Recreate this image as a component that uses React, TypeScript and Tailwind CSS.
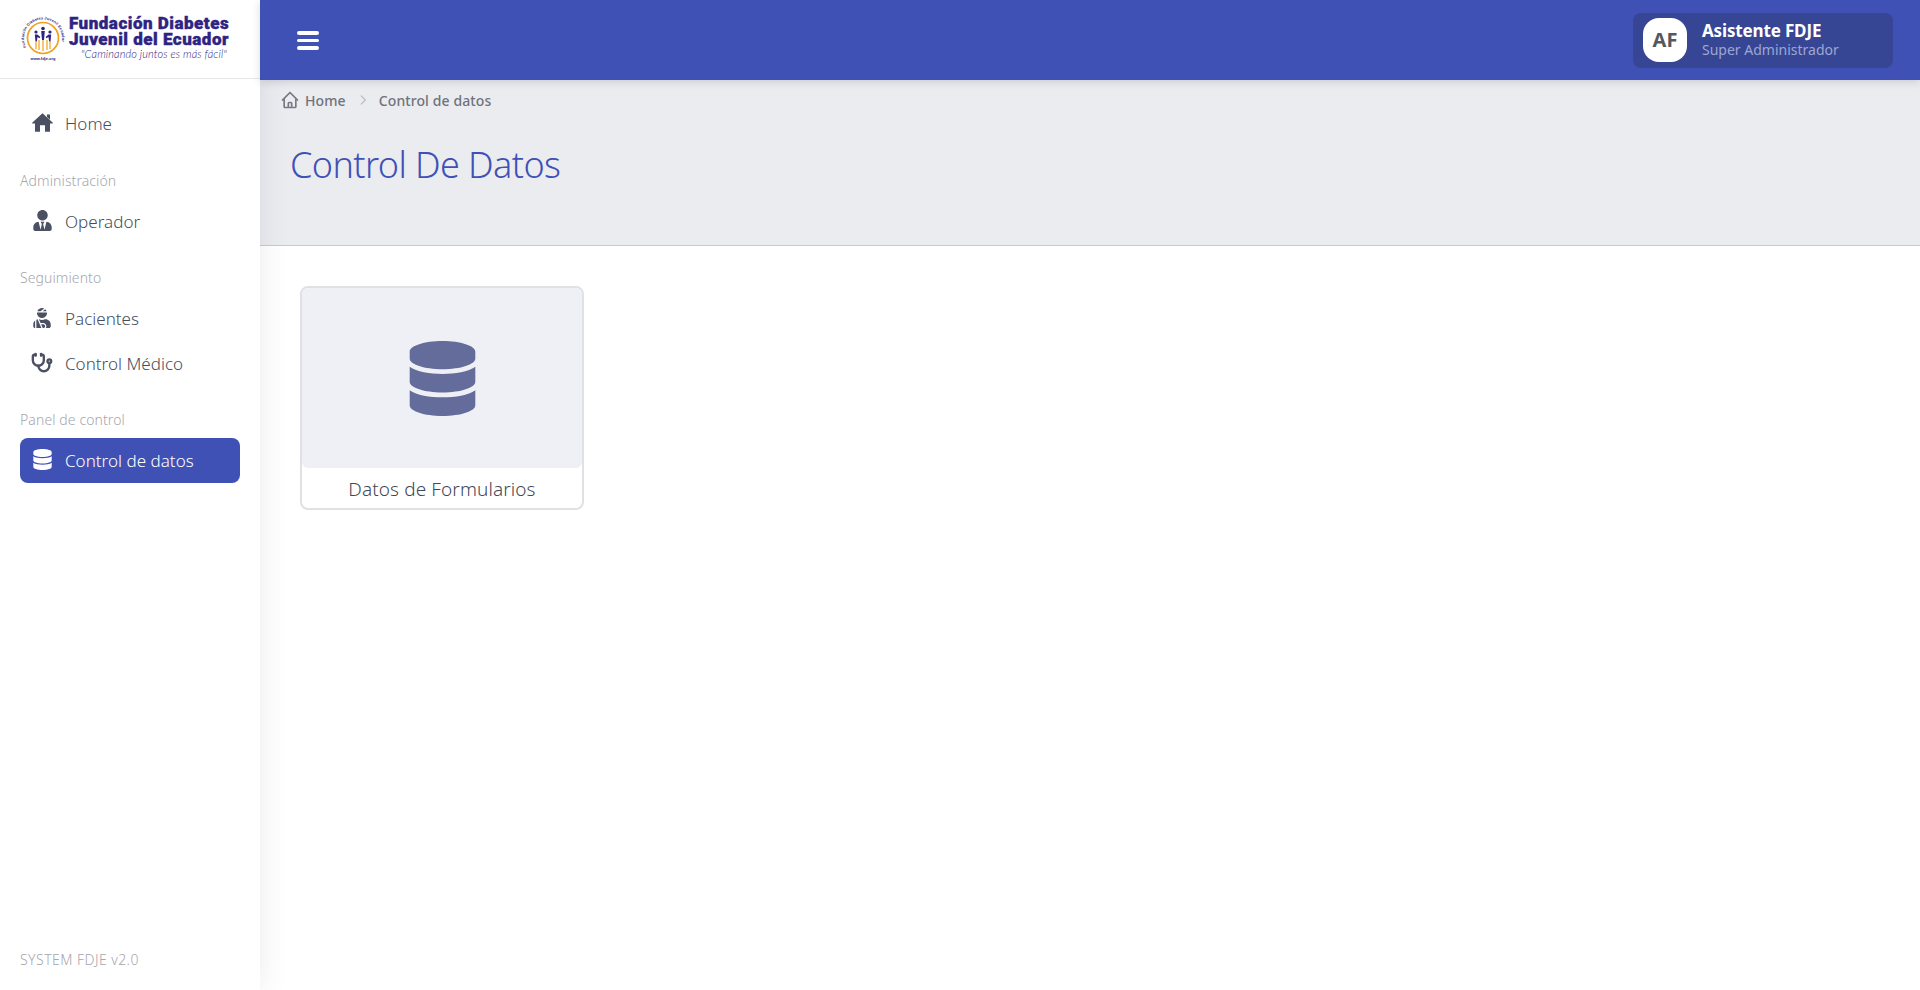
// Panel FDJE: sidebar, barra superior, cabecera de pagina y tarjeta de datos
import { FaDatabase, FaUserInjured, FaUserTie } from "react-icons/fa";
import { HiOutlineChevronRight, HiOutlineHome } from "react-icons/hi";
import { Stethoscope } from "lucide-react";
import type { ReactNode } from "react";

function Logo() {
  return (
    <div className="flex items-center h-[79px] pl-[20px] shrink-0 border-b border-[#e6e7ea]">
      <svg width="46" height="46" viewBox="0 0 46 46" className="shrink-0">
        <defs>
          <path id="logo-ring" d="M6.2 31.2 A19 19 0 1 1 39.8 31.2" fill="none" />
        </defs>
        <text fontSize="3.8" fontWeight="700" fill="#2e2383" fontFamily="Liberation Sans, sans-serif">
          <textPath href="#logo-ring" textLength="72">Fundación Diabetes Juvenil Ecuador</textPath>
        </text>
        <circle cx="23" cy="22" r="15.5" fill="#fff" stroke="#f0a01e" strokeWidth="1.7" />
        <g fill="#2e2383">
          <circle cx="23" cy="12.5" r="1.8" />
          <circle cx="16" cy="16" r="1.6" />
          <circle cx="30" cy="16" r="1.6" />
          <path d="M21.2 15 h3.6 l-.8 9 h-2z" />
          <path d="M14.8 18.5 h2.6 l3 2.5 -.9 1.2 -2-1.2 -.6 4.5 h-1.4z" />
          <path d="M31.2 18.5 h-2.6 l-3 2.5 .9 1.2 2-1.2 .6 4.5 h1.4z" />
        </g>
        <path d="M16 25 v8 M19 24 v10 M23 24 v11 M27 24 v10 M30 25 v8" stroke="#f0a01e" strokeWidth="1.2" />
        <text x="23" y="44" textAnchor="middle" fontSize="4" fontWeight="700" fill="#2e2383" fontFamily="Liberation Sans, sans-serif">www.fdje.org</text>
      </svg>
      <div className="ml-[3px] -mt-[3px] flex flex-col items-start">
        <span className="w-[170px] text-[17px] leading-[16px] font-black tracking-[0.5px] text-[#2e2383] font-['Roboto',sans-serif] [-webkit-text-stroke:0.4px_#2e2383]">Fundación Diabetes Juvenil del Ecuador</span>
        <span className="ml-[12px] text-[11px] leading-[13px] italic font-light tracking-[0.1px] text-[#2e2383] font-['Lato',sans-serif]">"Caminando juntos es más fácil"</span>
      </div>
    </div>
  );
}

function HomeIcon() {
  return (
    <svg width="21" height="19" viewBox="0 0 21 19" fill="currentColor">
      <path d="M10.5 0.3 L20.6 9.6 a0.5 0.5 0 0 1 -0.3 0.9 H18 V18.2 a0.6 0.6 0 0 1 -0.6 0.6 H13 V12.2 H8 V18.8 H3.6 a0.6 0.6 0 0 1 -0.6 -0.6 V10.5 H0.7 a0.5 0.5 0 0 1 -0.3 -0.9 Z" />
      <path d="M15 1.5 h2.6 a0.4 0.4 0 0 1 0.4 0.4 V6.8 L15 4z" />
    </svg>
  );
}

function NavItem({ icon, label, active }: { icon: ReactNode; label: string; active?: boolean }) {
  return (
    <div
      className={
        active
          ? "flex items-center h-[45px] pl-[11px] rounded-[8px] bg-[#3f51b5] text-white"
          : "flex items-center h-[45px] pl-[11px] text-[#484d5b]"
      }
    >
      <span className={active ? "w-[22px] flex justify-center -mt-[2px] text-white" : "w-[22px] flex justify-center -mt-[2px] text-[#4b5163]"}>{icon}</span>
      <span className="ml-[12px] text-[17px] leading-none font-light tracking-[0.02px]">{label}</span>
    </div>
  );
}

function NavLabel({ children, tight }: { children: string; tight?: boolean }) {
  return (
    <div
      className={
        tight
          ? "mt-[24px] mb-[8px] h-[20px] text-[14px] leading-[20px] font-light tracking-[0.1px] text-[#a5a7ae]"
          : "mt-[24.5px] mb-[8px] h-[20px] text-[14px] leading-[20px] font-light tracking-[0.1px] text-[#a5a7ae]"
      }
    >
      {children}
    </div>
  );
}

function Sidebar() {
  return (
    <aside className="relative z-10 w-[260px] shrink-0 flex flex-col bg-white shadow-[0_0_28px_rgba(60,60,80,0.1)]">
      <Logo />
      <nav className="flex-1 px-[20px] pt-[22px]">
        <NavItem icon={<HomeIcon />} label="Home" />
        <NavLabel>Administración</NavLabel>
        <NavItem icon={<FaUserTie size={21} />} label="Operador" />
        <NavLabel>Seguimiento</NavLabel>
        <NavItem icon={<FaUserInjured size={20} />} label="Pacientes" />
        <NavItem icon={<Stethoscope size={24} strokeWidth={2.6} />} label="Control Médico" />
        <NavLabel tight>Panel de control</NavLabel>
        <NavItem icon={<FaDatabase size={21} />} label="Control de datos" active />
      </nav>
      <div className="px-[20px] pb-[20px] text-[14px] leading-[20px] font-light tracking-[0.45px] text-[#a5a7ae]">SYSTEM FDJE v2.0</div>
    </aside>
  );
}

function Topbar() {
  return (
    <header className="relative z-10 h-[80px] shrink-0 flex items-center justify-between pl-[37px] pr-[27px] bg-[#3f51b5] shadow-[0_2px_8px_rgba(40,40,60,0.16)]">
      <div className="flex flex-col gap-[4px] w-[22px]">
        <span className="h-[4px] rounded-full bg-white" />
        <span className="h-[3px] rounded-full bg-white" />
        <span className="h-[4px] rounded-full bg-white" />
      </div>
      <div className="flex items-center w-[260px] h-[55px] pl-[10px] rounded-[8px] bg-[#374694]">
        <div className="w-[44px] h-[44px] rounded-[16px] bg-white flex items-center justify-center text-[20px] font-bold text-[#54585f]">AF</div>
        <div className="ml-[15px] flex flex-col">
          <span className="text-[17px] leading-[20px] font-bold tracking-[-0.15px] text-white">Asistente FDJE</span>
          <span className="text-[14px] leading-[18px] tracking-[0px] text-[#9da6d2]">Super Administrador</span>
        </div>
      </div>
    </header>
  );
}

function PageHead() {
  return (
    <div className="h-[166px] shrink-0 bg-[#ebecf0] border-b border-[#c9cacd]">
      <div className="flex items-center h-[40px] pl-[20px] text-[14px] font-medium tracking-[0.1px] text-[#6f737c]">
        <HiOutlineHome size={20} className="text-[#777a83]" />
        <span className="ml-[5px]">Home</span>
        <HiOutlineChevronRight size={14} className="ml-[10px] text-[#b9bbc2]" />
        <span className="ml-[9px]">Control de datos</span>
      </div>
      <h1 className="mt-[23px] pl-[30px] text-[36px] leading-[44px] font-light tracking-[-0.6px] text-[#3f51b5]">Control De Datos</h1>
    </div>
  );
}

function DataCard() {
  return (
    <div className="w-[284px] h-[224px] flex flex-col rounded-[8px] border-2 border-[#e0e1e5] bg-white">
      <div className="h-[180px] flex items-center justify-center rounded-[6px] bg-[#eff0f6]">
        <FaDatabase size={75} className="text-[#636c9a]" />
      </div>
      <div className="flex-1 flex items-center justify-center pt-[3px] text-[19px] font-light tracking-[0.1px] text-[#3f4957]">Datos de Formularios</div>
    </div>
  );
}

export default function App() {
  return (
    <div className="flex w-[1920px] h-[990px] overflow-hidden bg-white font-['Noto_Sans',sans-serif]">
      <Sidebar />
      <main className="flex-1 flex flex-col min-w-0">
        <Topbar />
        <PageHead />
        <div className="pt-[40px] pl-[40px]">
          <DataCard />
        </div>
      </main>
    </div>
  );
}
